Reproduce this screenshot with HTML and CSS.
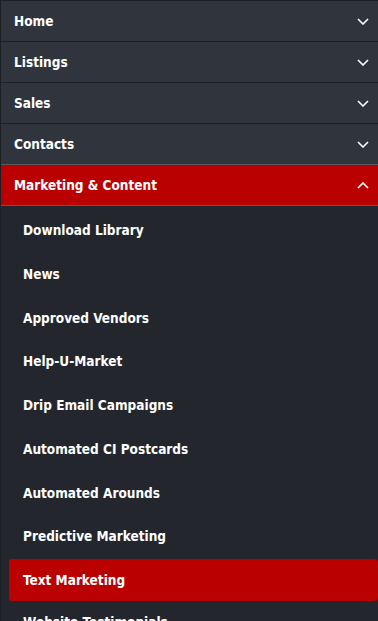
FILE: index.html
```html
<!DOCTYPE html>
<html lang="en">
<head>
    <meta charset="UTF-8">
    <meta name="viewport" content="width=device-width, initial-scale=1.0">
    <title>Menu</title>
    <link rel="stylesheet" href="styles.css">
</head>
<body>

<nav class="side-menu">
    <div class="menu-group">
        <div class="menu-head"><span>Home</span><svg class="chevron" viewBox="0 0 12 7"><path d="M1 1l5 5 5-5"/></svg></div>
    </div>
    <div class="menu-group">
        <div class="menu-head"><span>Listings</span><svg class="chevron" viewBox="0 0 12 7"><path d="M1 1l5 5 5-5"/></svg></div>
    </div>
    <div class="menu-group">
        <div class="menu-head"><span>Sales</span><svg class="chevron" viewBox="0 0 12 7"><path d="M1 1l5 5 5-5"/></svg></div>
    </div>
    <div class="menu-group">
        <div class="menu-head"><span>Contacts</span><svg class="chevron" viewBox="0 0 12 7"><path d="M1 1l5 5 5-5"/></svg></div>
    </div>
    <div class="menu-group open">
        <div class="menu-head"><span>Marketing &amp; Content</span><svg class="chevron" viewBox="0 0 12 7"><path d="M1 6l5-5 5 5"/></svg></div>
        <ul class="sub-menu">
            <li>Download Library</li>
            <li>News</li>
            <li>Approved Vendors</li>
            <li>Help-U-Market</li>
            <li>Drip Email Campaigns</li>
            <li>Automated CI Postcards</li>
            <li>Automated Arounds</li>
            <li>Predictive Marketing</li>
            <li class="current">Text Marketing</li>
            <li>Website Testimonials</li>
        </ul>
    </div>
</nav>

</body>
</html>
```

FILE: styles.css
```css
body {
    margin: 0;
    background-color: #23272d;
    font-family: 'DejaVu Sans Condensed', 'DejaVu Sans', Verdana, sans-serif;
    font-weight: bold;
    color: #fff;
}
.side-menu {
    border-left: 1px solid #1c1f24;
    border-top: 1px solid #1c1f24;
}
.menu-head {
    display: flex;
    justify-content: space-between;
    align-items: center;
    height: 40px;
    padding: 0 9px 0 13px;
    background-color: #30353d;
    border-bottom: 1px solid #1c1f24;
    font-size: 13.5px;
}
.chevron {
    width: 12px;
    height: 7px;
    fill: none;
    stroke: #fff;
    stroke-width: 1.6;
}
.open .menu-head {
    background-color: #bb0000;
    border-top: 1px solid #5a5a5a;
    border-bottom: 1px solid #5a5a5a;
    margin-top: -1px;
}
.sub-menu {
    list-style: none;
    margin: 0;
    padding: 3px 0 0 8px;
}
.sub-menu li {
    height: 43.75px;
    line-height: 43.75px;
    padding-left: 14px;
    font-size: 13.5px;
    border-radius: 3px;
}
.sub-menu li.current {
    background-color: #bb0000;
    height: 42px;
    line-height: 42px;
}
```
